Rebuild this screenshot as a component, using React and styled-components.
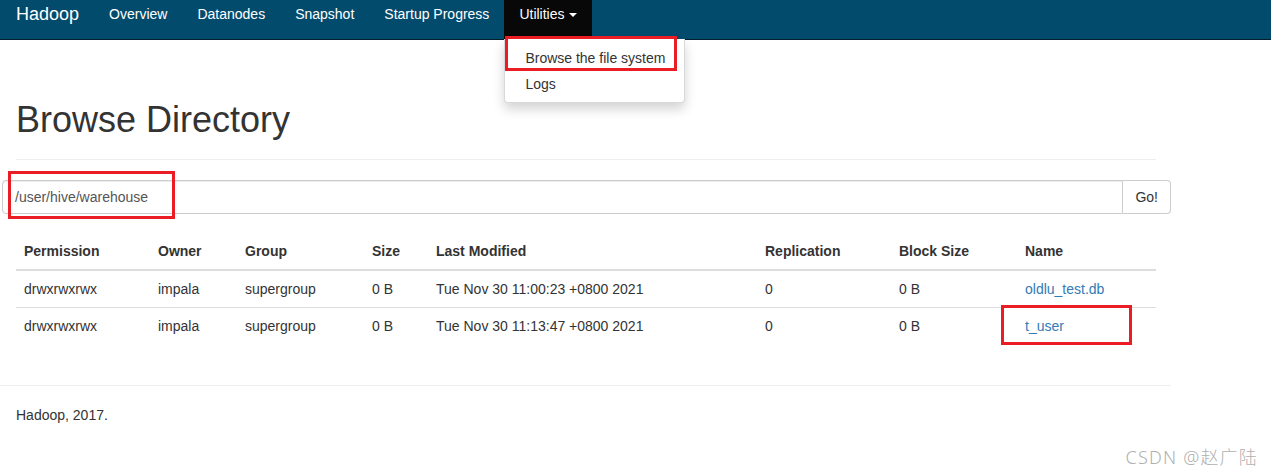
import React from "react";
import styled, { createGlobalStyle } from "styled-components";

const GlobalStyle = createGlobalStyle`
  html, body {
    margin: 0;
    padding: 0;
    background: #fff;
  }
  body {
    font-family: "Liberation Sans", Arial, sans-serif;
    font-size: 14px;
    line-height: 20px;
    color: #333;
  }
  * { box-sizing: border-box; }
`;

const Page = styled.div`
  position: relative;
  width: 1271px;
  height: 473px;
  overflow: hidden;
`;

const Navbar = styled.nav`
  display: flex;
  height: 40px;
  background: #034b6d;
  border-bottom: 1px solid #02202e;
  padding-left: 1px;
`;

const Brand = styled.div`
  padding: 4px 15px 0 15px;
  font-size: 18px;
  line-height: 20px;
  color: #fff;
`;

const NavItem = styled.div`
  position: relative;
  padding: 4px 15px 0 15px;
  line-height: 20px;
  color: #fff;
  background: ${(p) => (p.$active ? "#080808" : "transparent")};
`;

const Caret = styled.span`
  display: inline-block;
  margin-left: 1px;
  vertical-align: middle;
  border-top: 4px solid #fff;
  border-left: 4px solid transparent;
  border-right: 4px solid transparent;
`;

const Dropdown = styled.ul`
  position: absolute;
  top: 39px;
  left: 0;
  width: 181px;
  margin: 0;
  padding: 6px 0 5px;
  list-style: none;
  background: #fff;
  border: 1px solid rgba(0, 0, 0, 0.15);
  border-top: 0;
  border-radius: 0 0 4px 4px;
  box-shadow: 0 6px 12px rgba(0, 0, 0, 0.175);
  z-index: 5;
`;

const DropItem = styled.li`
  padding: 3px 20px;
  line-height: 20px;
  color: #333;
  white-space: nowrap;
`;

const Main = styled.main`
  width: 1171px;
  padding: 0 15px 0 16px;
`;

const PageHeader = styled.div`
  margin: 60px 0 20px;
  padding-bottom: 9px;
  border-bottom: 1px solid #eee;
`;

const Title = styled.h1`
  margin: 0 0 10px;
  font-size: 36px;
  font-weight: 500;
  line-height: 39.6px;
  color: #333;
`;

const InputGroup = styled.div`
  display: flex;
  margin: 0 -15px 0 -14px;
  height: 34px;
`;

const PathInput = styled.div`
  flex: 1;
  padding: 6px 12px;
  border: 1px solid #ccc;
  border-radius: 4px 0 0 4px;
  box-shadow: inset 0 1px 1px rgba(0, 0, 0, 0.075);
  color: #555;
`;

const GoButton = styled.div`
  padding: 6px 12px;
  border: 1px solid #ccc;
  border-left: 0;
  border-radius: 0 4px 4px 0;
  color: #333;
  background: #fff;
`;

const Table = styled.div`
  display: grid;
  grid-template-columns: 134px 87px 127px 64px 329px 134px 126px 1fr;
  margin: 19px 0 0;
`;

const HeadCell = styled.div`
  padding: 8px;
  font-weight: bold;
  border-bottom: 2px solid #ddd;
`;

const Cell = styled.div`
  padding: 8px;
  border-top: ${(p) => (p.$first ? "0" : "1px solid #ddd")};
  color: ${(p) => (p.$link ? "#337ab7" : "#333")};
`;

const FooterRule = styled.hr`
  margin: 41px 0 0 -16px;
  width: 1171px;
  border: 0;
  border-top: 1px solid #eee;
`;

const Footer = styled.footer`
  padding-top: 19px;
`;

const Mark = styled.div`
  position: absolute;
  border: 3px solid #ea1c24;
  pointer-events: none;
  z-index: 10;
`;

const Watermark = styled.div`
  position: absolute;
  right: 13px;
  bottom: 6px;
  font-family: "Noto Sans", "Noto Sans CJK SC", sans-serif;
  font-size: 18px;
  font-weight: 300;
  color: #b0b0b0;
  letter-spacing: 1.2px;
`;

const headers = [
  "Permission",
  "Owner",
  "Group",
  "Size",
  "Last Modified",
  "Replication",
  "Block Size",
  "Name",
];

const rows = [
  ["drwxrwxrwx", "impala", "supergroup", "0 B", "Tue Nov 30 11:00:23 +0800 2021", "0", "0 B", "oldlu_test.db"],
  ["drwxrwxrwx", "impala", "supergroup", "0 B", "Tue Nov 30 11:13:47 +0800 2021", "0", "0 B", "t_user"],
];

export default function App() {
  return (
    <Page>
      <GlobalStyle />
      <Navbar>
        <Brand>Hadoop</Brand>
        <NavItem>Overview</NavItem>
        <NavItem>Datanodes</NavItem>
        <NavItem>Snapshot</NavItem>
        <NavItem>Startup Progress</NavItem>
        <NavItem $active>
          Utilities <Caret />
          <Dropdown>
            <DropItem>Browse the file system</DropItem>
            <DropItem>Logs</DropItem>
          </Dropdown>
        </NavItem>
      </Navbar>
      <Main>
        <PageHeader>
          <Title>Browse Directory</Title>
        </PageHeader>
        <InputGroup>
          <PathInput>/user/hive/warehouse</PathInput>
          <GoButton>Go!</GoButton>
        </InputGroup>
        <Table>
          {headers.map((h) => (
            <HeadCell key={h}>{h}</HeadCell>
          ))}
          {rows.map((r, i) =>
            r.map((c, j) => (
              <Cell key={i + "-" + j} $first={i === 0} $link={j === 7}>
                {c}
              </Cell>
            ))
          )}
        </Table>
        <FooterRule />
        <Footer>Hadoop, 2017.</Footer>
      </Main>
      <Mark style={{ left: 505, top: 36, width: 172, height: 35 }} />
      <Mark style={{ left: 8, top: 171, width: 167, height: 48 }} />
      <Mark style={{ left: 1001, top: 305, width: 131, height: 40 }} />
      <Watermark>CSDN @赵广陆</Watermark>
    </Page>
  );
}
